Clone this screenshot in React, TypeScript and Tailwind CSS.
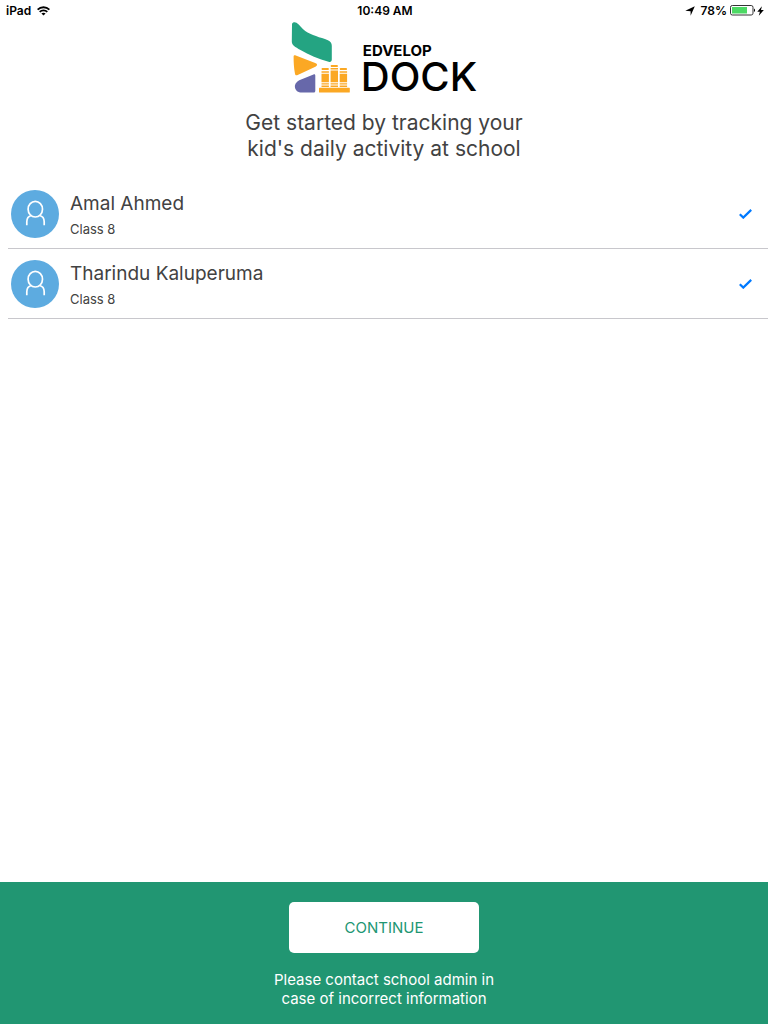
import { useState } from "react";

const students = [
  { id: 1, name: "Amal Ahmed", grade: "Class 8" },
  { id: 2, name: "Tharindu Kaluperuma", grade: "Class 8" },
];

function StatusBar() {
  return (
    <div className="grid h-5 grid-cols-3 items-center pt-px pr-1 pl-1.5 text-xs font-semibold text-black">
      <div className="flex items-center gap-1.5">
        <span>iPad</span>
        <svg className="h-[10px] w-[13px]" viewBox="0 0 13 10" fill="none" stroke="black" strokeWidth="1.8">
          <path d="M.6 3.7C3.9.4 9.1.4 12.4 3.7" />
          <path d="M2.7 5.9c2.1-2.1 5.5-2.1 7.6 0" />
          <path d="M6.5 9.6 4.4 7.5c1.2-1.1 3-1.1 4.2 0z" fill="black" stroke="none" />
        </svg>
      </div>
      <span className="text-center">10:49 AM</span>
      <div className="flex items-center justify-end">
        <svg className="mr-1.5 h-[10px] w-[10px]" viewBox="0 0 10 10">
          <path d="M9.8.3 5.6 9.8V5.3L.3 4.8z" fill="black" />
        </svg>
        <span>78%</span>
        <svg className="ml-[3px] h-[11px] w-[26px]" viewBox="0 0 26 11">
          <rect x=".5" y=".5" width="22.5" height="9.5" rx="1.8" fill="none" stroke="#333" />
          <rect x="2" y="2" width="15" height="6.5" fill="#4cd964" />
          <path d="M24 3.5c1.4.6 1.4 3 0 3.6z" fill="black" />
        </svg>
        <svg className="ml-px h-[10px] w-[7px]" viewBox="0 0 7 10">
          <path d="M4.9.2.3 5.8h2.6L1.8 9.8l5-5.7H4z" fill="black" />
        </svg>
      </div>
    </div>
  );
}

function Logo() {
  return (
    <div className="flex h-[74px] justify-center gap-3 pt-0.5">
      <svg className="h-[72px] w-[60px]" viewBox="0 0 60 72" aria-hidden="true">
        <path
          d="M1 2.2C1.3.3 3.7-.2 5.5.8c3 2 5.5 5.8 8.7 8.2 6 4.4 15.2 6.2 22.7 9.2 2.7 1.2 3.9 2.8 3.9 5.5v13.8c0 2-1.3 2.8-3.2 2.2C27.8 36.9 17.8 33 9.5 28 4 24.6.8 23.3.8 19.4z"
          fill="#24a482"
        />
        <path d="M2.6 34.8c0-1.4.9-1.8 2.2-1.3l19.4 7.6c2.5 1.1 2.5 2.5.2 3.7L6.7 53c-1.5.7-2.4.3-2.7-1.3C2.8 45.6 2.6 40 2.6 34.8z" fill="#fba824" />
        <path d="m22.5 52.4-13 5.3c-3.4 1.4-5.8 3.9-5.6 7.2.3 3.5 3.2 5.7 7 5.7h11.4c1.3 0 2-.6 2-1.9V53.7c0-1.3-.6-1.8-1.8-1.3z" fill="#6768aa" />
        <rect x="28" y="65.8" width="30.8" height="4.7" rx=".6" fill="#fba824" />
        <g fill="#fba824">
          <rect x="30.7" y="46" width="7" height="2" rx=".6" />
          <path d="M30.5 49.3h7.4v1.4h-7.4zM30.5 51.7h7.4v8.6h-7.4zM30.5 61.2h7.4v1.4h-7.4zM30.5 63.4h7.4v1.7h-7.4z" />
          <rect x="39.8" y="43" width="7" height="2" rx=".6" />
          <path d="M39.6 46h7.4v1.4h-7.4zM39.6 48.5h7.4v11.8h-7.4zM39.6 61.2h7.4v1.4h-7.4zM39.6 63.4h7.4v1.7h-7.4z" />
          <rect x="48.9" y="46" width="7" height="2" rx=".6" />
          <path d="M48.7 49.3h7.4v1.4h-7.4zM48.7 51.7h7.4v8.6h-7.4zM48.7 61.2h7.4v1.4h-7.4zM48.7 63.4h7.4v1.7h-7.4z" />
        </g>
      </svg>
      <h1 className="flex flex-col pt-[21px] text-black">
        <span className="text-[15px] leading-4 font-bold">EDVELOP</span>
        <span className="-ml-0.5 text-[40px] leading-9 font-medium">DOCK</span>
      </h1>
    </div>
  );
}

function Avatar() {
  return (
    <svg className="size-12 shrink-0" viewBox="0 0 48 48" fill="none" stroke="white" strokeWidth="1.7" aria-hidden="true">
      <circle cx="24" cy="24" r="24" fill="#5dabe0" stroke="none" />
      <ellipse cx="24.3" cy="19.2" rx="7.2" ry="7.8" />
      <path d="M15.8 35.2v-3.4c0-3.6 1.4-5.6 4.6-6.3M33.2 35.2v-3.4c0-3.6-1.4-5.6-4.6-6.3" />
    </svg>
  );
}

export default function App() {
  const [selected, setSelected] = useState<number[]>([1, 2]);
  const toggle = (id: number) =>
    setSelected((ids) => (ids.includes(id) ? ids.filter((i) => i !== id) : [...ids, id]));

  return (
    <div className="flex min-h-screen flex-col bg-white font-['Inter',sans-serif] text-[#424242]">
      <StatusBar />
      <Logo />
      <p className="mt-4 text-center text-[21px] leading-[26px]">
        Get started by tracking your
        <br />
        kid's daily activity at school
      </p>

      <ul className="mt-[17px] flex-1">
        {students.map((student) => (
          <li key={student.id} className="ml-2 border-b border-[#c8c7cc]">
            <label className="flex h-[69px] cursor-pointer items-center pr-4 pl-[3px]">
              <Avatar />
              <span className="ml-[11px] flex flex-1 flex-col pt-0.5">
                <span className="text-[19px] leading-7">{student.name}</span>
                <span className="text-[13px] leading-[22px]">{student.grade}</span>
              </span>
              <span className="grid h-[10px] w-[13px]">
                <input
                  type="checkbox"
                  checked={selected.includes(student.id)}
                  onChange={() => toggle(student.id)}
                  className="peer col-start-1 row-start-1 appearance-none"
                />
                <svg
                  className="pointer-events-none invisible col-start-1 row-start-1 h-[10px] w-[13px] peer-checked:visible"
                  viewBox="0 0 13 10"
                  fill="none"
                  stroke="#007aff"
                  strokeWidth="2.2"
                >
                  <path d="m.8 5.2 3.5 3.4L12.2.9" />
                </svg>
              </span>
            </label>
          </li>
        ))}
      </ul>

      <footer className="flex flex-col items-center bg-[#219672] pt-5 pb-4 text-white">
        <button type="button" className="h-[51px] w-[190px] rounded-[5px] bg-white pt-0.5 text-[15px] text-[#219672]">
          CONTINUE
        </button>
        <p className="mt-[17px] text-center text-[15px] leading-[19px]">
          Please contact school admin in
          <br />
          case of incorrect information
        </p>
      </footer>
    </div>
  );
}
